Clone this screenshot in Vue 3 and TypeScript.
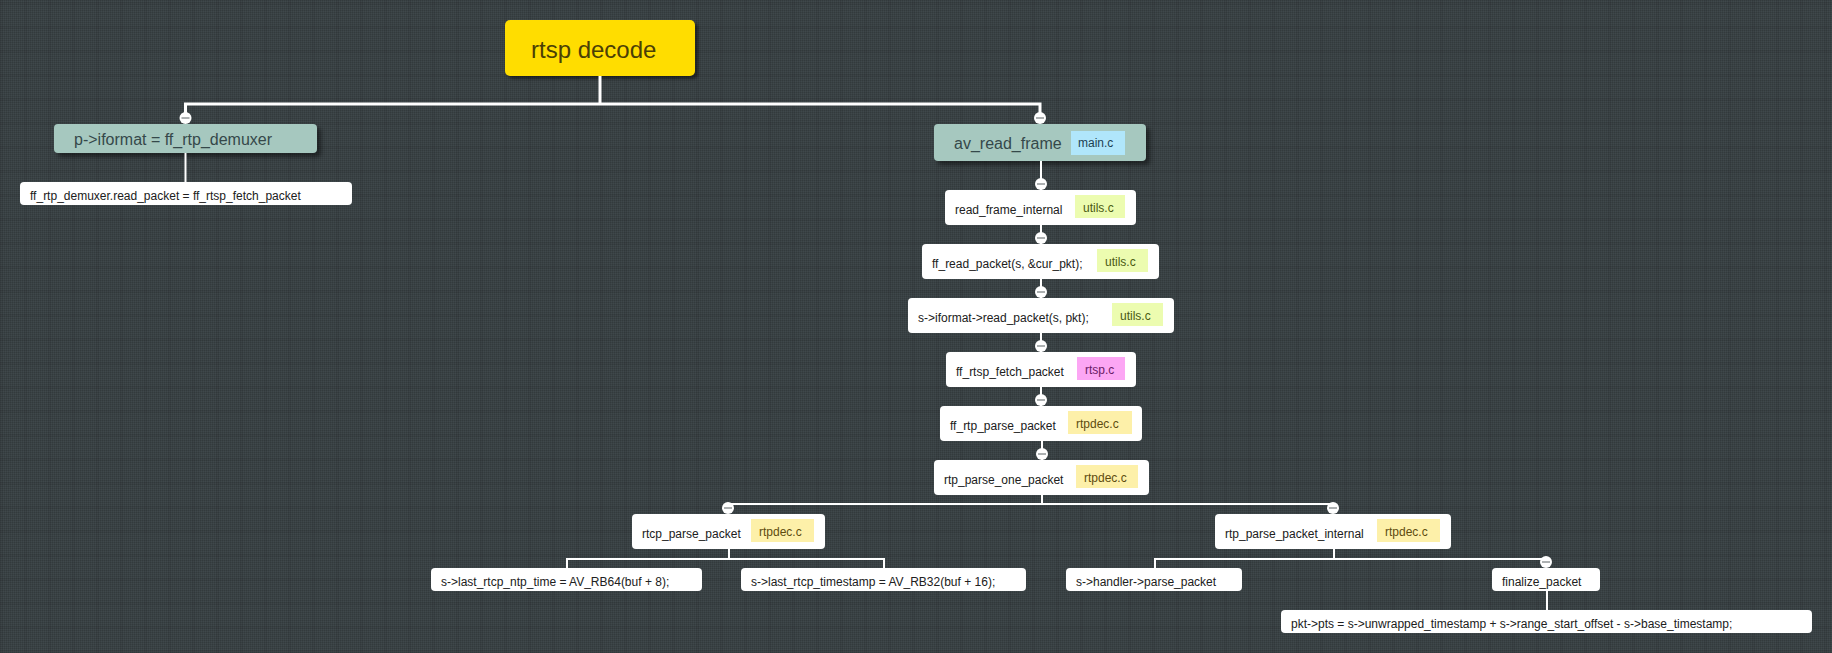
<script setup lang="ts">
interface MapNode {
  label: string
  kind: 'root' | 'branch' | 'leaf'
  x: number
  y: number
  w: number
  h: number
  tag?: string
  tagKind?: 'blue' | 'lime' | 'pink' | 'sand'
  tagW?: number
  tagRight?: number
}

const nodes: MapNode[] = [
  { label: 'rtsp decode', kind: 'root', x: 505, y: 20, w: 190, h: 56 },
  { label: 'p->iformat = ff_rtp_demuxer', kind: 'branch', x: 54, y: 124, w: 263, h: 29 },
  { label: 'ff_rtp_demuxer.read_packet = ff_rtsp_fetch_packet', kind: 'leaf', x: 20, y: 182, w: 332, h: 23 },
  { label: 'av_read_frame', kind: 'branch', x: 934, y: 124, w: 212, h: 37, tag: 'main.c', tagKind: 'blue', tagW: 54, tagRight: 21 },
  { label: 'read_frame_internal', kind: 'leaf', x: 945, y: 190, w: 191, h: 35, tag: 'utils.c', tagKind: 'lime', tagW: 50, tagRight: 11 },
  { label: 'ff_read_packet(s, &cur_pkt);', kind: 'leaf', x: 922, y: 244, w: 237, h: 35, tag: 'utils.c', tagKind: 'lime', tagW: 51, tagRight: 11 },
  { label: 's->iformat->read_packet(s, pkt);', kind: 'leaf', x: 908, y: 298, w: 266, h: 35, tag: 'utils.c', tagKind: 'lime', tagW: 51, tagRight: 11 },
  { label: 'ff_rtsp_fetch_packet', kind: 'leaf', x: 946, y: 352, w: 190, h: 35, tag: 'rtsp.c', tagKind: 'pink', tagW: 48, tagRight: 11 },
  { label: 'ff_rtp_parse_packet', kind: 'leaf', x: 940, y: 406, w: 202, h: 35, tag: 'rtpdec.c', tagKind: 'sand', tagW: 64, tagRight: 10 },
  { label: 'rtp_parse_one_packet', kind: 'leaf', x: 934, y: 460, w: 215, h: 35, tag: 'rtpdec.c', tagKind: 'sand', tagW: 62, tagRight: 11 },
  { label: 'rtcp_parse_packet', kind: 'leaf', x: 632, y: 514, w: 193, h: 35, tag: 'rtpdec.c', tagKind: 'sand', tagW: 63, tagRight: 11 },
  { label: 'rtp_parse_packet_internal', kind: 'leaf', x: 1215, y: 514, w: 236, h: 35, tag: 'rtpdec.c', tagKind: 'sand', tagW: 63, tagRight: 11 },
  { label: 's->last_rtcp_ntp_time = AV_RB64(buf + 8);', kind: 'leaf', x: 431, y: 568, w: 271, h: 23 },
  { label: 's->last_rtcp_timestamp = AV_RB32(buf + 16);', kind: 'leaf', x: 741, y: 568, w: 285, h: 23 },
  { label: 's->handler->parse_packet', kind: 'leaf', x: 1066, y: 568, w: 176, h: 23 },
  { label: 'finalize_packet', kind: 'leaf', x: 1492, y: 568, w: 108, h: 23 },
  { label: 'pkt->pts = s->unwrapped_timestamp + s->range_start_offset - s->base_timestamp;', kind: 'leaf', x: 1281, y: 610, w: 531, h: 23 },
]

const thick = [
  'M600 76V104',
  'M185.5 119V104H1040V119',
]
const thin = [
  'M185.5 153V182',
  'M1041 161V190',
  'M1041 225V244',
  'M1041 279V298',
  'M1041 333V352',
  'M1041 387V406',
  'M1042 441V460',
  'M1042 495V504',
  'M728 509V504H1333V509',
  'M729 549V559',
  'M567 568V559H884V568',
  'M1334 549V559',
  'M1155 568V559H1546V563',
  'M1547 591V610',
]
const toggles: [number, number][] = [
  [185.5, 118], [1040, 118], [1041, 184], [1041, 238], [1041, 292],
  [1041, 346], [1041, 400], [1042, 454], [728, 508], [1333, 508], [1546, 562],
]

function box(n: MapNode) {
  return { left: `${n.x}px`, top: `${n.y}px`, width: `${n.w}px`, height: `${n.h}px` }
}
function tagBox(n: MapNode) {
  return { width: `${n.tagW}px`, marginRight: `${n.tagRight}px` }
}
</script>

<template>
  <main class="canvas">
    <svg class="links" width="1832" height="653" viewBox="0 0 1832 653" aria-hidden="true">
      <path v-for="d in thick" :key="d" :d="d" class="link link-thick" />
      <path v-for="d in thin" :key="d" :d="d" class="link" />
      <g v-for="t in toggles" :key="`${t[0]}-${t[1]}`">
        <circle :cx="t[0]" :cy="t[1]" r="6" class="toggle" />
        <path :d="`M${t[0] - 4} ${t[1]}H${t[0] + 4}`" class="toggle-minus" />
      </g>
    </svg>
    <div v-for="n in nodes" :key="n.label" class="node" :class="n.kind" :style="box(n)">
      <span class="label">{{ n.label }}</span>
      <span v-if="n.tag" class="tag" :class="n.tagKind" :style="tagBox(n)">{{ n.tag }}</span>
    </div>
  </main>
</template>

<style>
html, body { margin: 0; padding: 0; background: #3a4245; overflow: hidden; }
</style>

<style scoped>
.canvas {
  position: relative;
  width: 1832px;
  height: 653px;
  overflow: hidden;
  font-family: "Liberation Sans", Arial, sans-serif;
  background-color: #3f484b;
  background-image:
    repeating-linear-gradient(90deg, rgba(0,0,0,.1) 0 1px, transparent 1px 2px),
    repeating-linear-gradient(0deg, rgba(0,0,0,.1) 0 1px, transparent 1px 2px),
    repeating-linear-gradient(90deg, rgba(0,0,0,.04) 0 3px, transparent 3px 24px),
    repeating-linear-gradient(0deg, rgba(0,0,0,.04) 0 3px, transparent 3px 24px);
}
.links { position: absolute; left: 0; top: 0; z-index: 2; pointer-events: none; }
.link { fill: none; stroke: #fff; stroke-width: 2; }
.link-thick { stroke-width: 3; }
.toggle { fill: #fff; }
.toggle-minus { stroke: #5a6265; stroke-width: 1; fill: none; }
.node {
  position: absolute;
  box-sizing: border-box;
  z-index: 1;
  display: flex;
  align-items: center;
  justify-content: space-between;
  border-radius: 4px;
  background: #fff;
  color: #202020;
  font-size: 12px;
  padding-left: 10px;
  white-space: nowrap;
}
.label { position: relative; top: 2px; }
.root {
  background: #ffdd00;
  color: #4b3f06;
  font-size: 24px;
  padding-left: 26px;
  border-radius: 5px;
  box-shadow: 3px 3px 3px rgba(0,0,0,.45);
}
.branch {
  background: #a6c8bf;
  color: #35484a;
  font-size: 16px;
  padding-left: 20px;
  box-shadow: 4px 4px 4px rgba(0,0,0,.45);
}
.branch .label { top: 1px; }
.tag {
  box-sizing: border-box;
  display: flex;
  align-items: center;
  height: 23px;
  font-size: 12px;
  padding-left: 8px;
}
.leaf .tag { position: relative; top: -1px; padding-top: 2px; }
.branch .tag { height: 24px; padding-left: 7px; }
.blue { background: #b0e6fb; color: #1b3f52; }
.lime { background: #ecfcb0; color: #4a5a12; }
.pink { background: #fca6f4; color: #6a1a66; }
.sand { background: #fdf0a9; color: #5e4c10; }
</style>
